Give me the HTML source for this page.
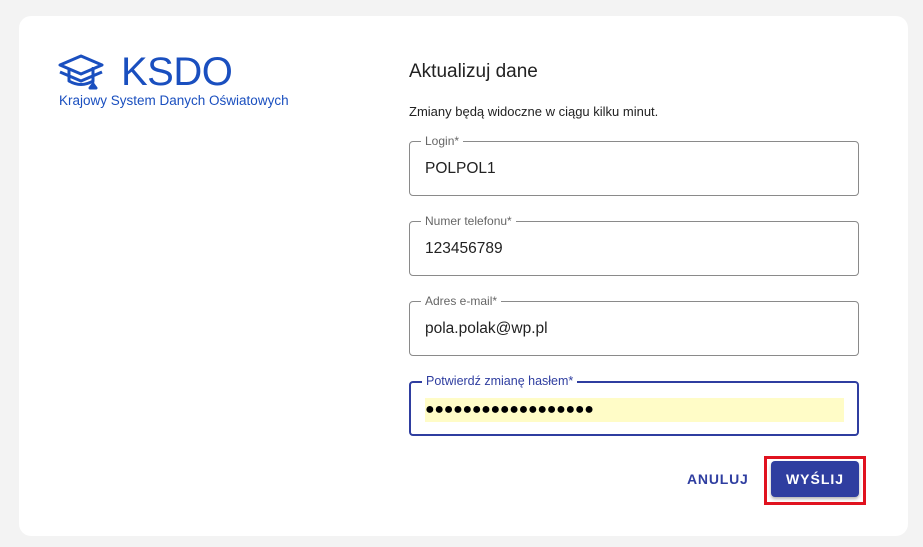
<!DOCTYPE html>
<html><head><meta charset="utf-8"><style>
*{box-sizing:border-box;margin:0;padding:0}
body{width:923px;height:547px;background:#f3f3f3;font-family:"Liberation Sans",sans-serif;position:relative;overflow:hidden}
.card{position:absolute;left:19px;top:16px;width:889px;height:520px;background:#fff;border-radius:12px}
.a{position:absolute}
.f{position:absolute;left:409px;width:450px;height:55px;border:1px solid #8a8a8a;border-radius:4px}
.f span.l{position:absolute;left:11px;top:-8px;background:#fff;padding:0 4px;font-size:12px;color:#666;line-height:14px}
.f .v{position:absolute;left:15px;top:18px;font-size:15.5px;color:#222}
</style></head><body>
<div class="card"></div>
<svg class="a" style="left:57px;top:53px" width="48" height="38" viewBox="0 0 48 38" fill="none" stroke="#1a4fbf" stroke-width="3" stroke-linejoin="round">
<path d="M24 3 L45 12 L24 21 L3 12 Z"/>
<path d="M3 19 L24 28 L45 19"/>
<path d="M12 16 V28 Q24 35 36 28 V16"/>
<path d="M36 14 V32" stroke-width="2.5"/>
<path d="M33 35 L36 31 L39 35 Z" fill="#1a4fbf"/>
</svg>
<div class="a" style="left:121px;top:49px;font-size:40px;color:#1a4fbf;line-height:46px;letter-spacing:-0.5px">KSDO</div>
<div class="a" style="left:59px;top:93px;font-size:13.5px;color:#1a4fbf">Krajowy System Danych Oświatowych</div>
<div class="a" style="left:409px;top:61px;font-size:19px;color:#222">Aktualizuj dane</div>
<div class="a" style="left:409px;top:104px;font-size:13px;color:#222">Zmiany będą widoczne w ciągu kilku minut.</div>
<div class="f" style="top:141px"><span class="l">Login*</span><div class="v">POLPOL1</div></div>
<div class="f" style="top:221px"><span class="l">Numer telefonu*</span><div class="v">123456789</div></div>
<div class="f" style="top:301px"><span class="l">Adres e-mail*</span><div class="v">pola.polak@wp.pl</div></div>
<div class="f" style="top:381px;border:2px solid #2f3ea0"><span class="l" style="color:#2f3ea0;top:-9px;font-size:12.5px">Potwierdź zmianę hasłem*</span>
<div class="a" style="left:14px;top:15px;width:419px;height:24px;background:#fffcc7;font-size:16px;line-height:24px;letter-spacing:-0.3px;color:#000">●●●●●●●●●●●●●●●●●●</div></div>
<div class="a" style="left:687px;top:471px;font-size:14px;font-weight:bold;color:#2f3ea0;letter-spacing:0.8px">ANULUJ</div>
<div class="a" style="left:764px;top:456px;width:102px;height:49px;border:3px solid #e0121f"></div>
<div class="a" style="left:771px;top:461px;width:88px;height:36px;background:#2f3ea0;border-radius:4px;box-shadow:0 2px 3px rgba(0,0,0,.3);color:#fff;font-size:14px;font-weight:bold;letter-spacing:1px;text-align:center;line-height:36px">WYŚLIJ</div>
</body></html>
